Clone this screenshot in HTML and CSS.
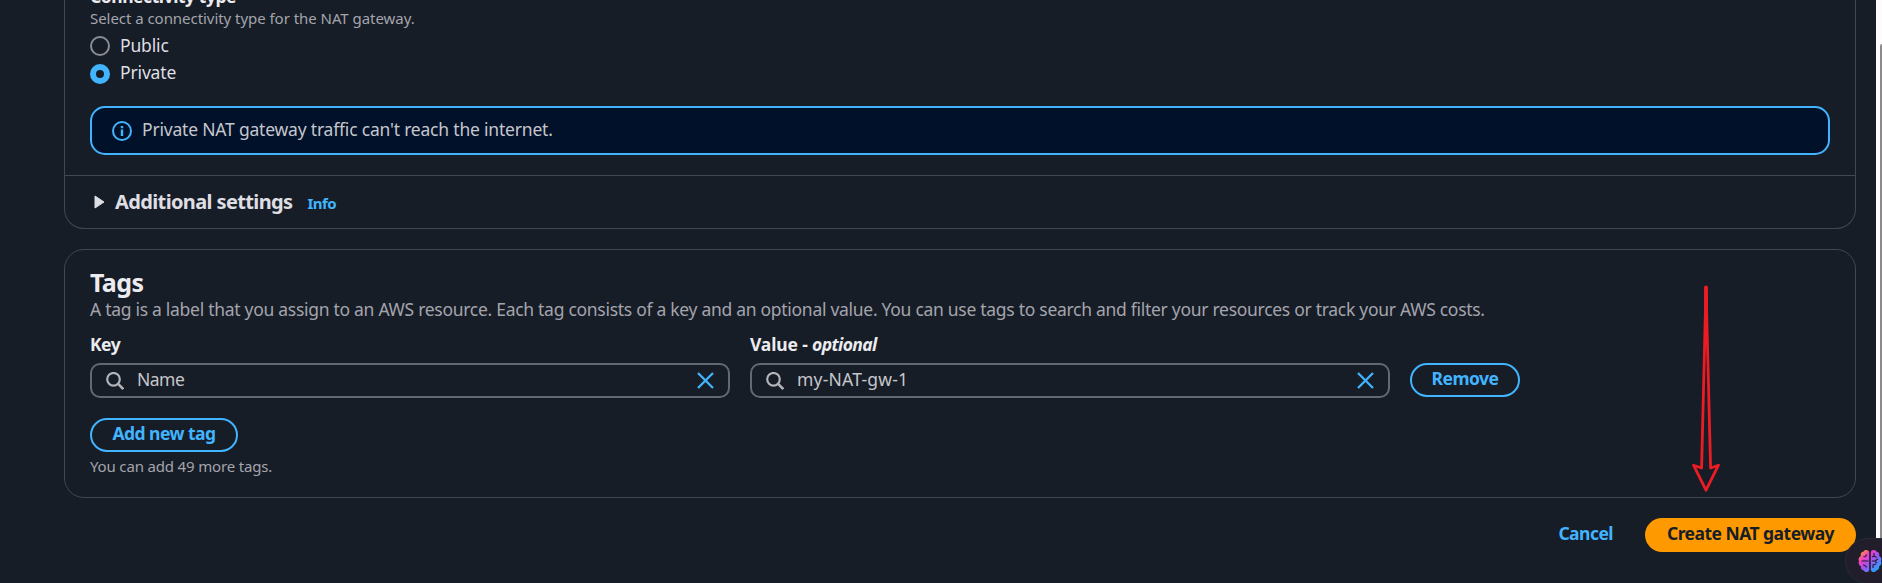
FILE: index.html
```html
<!DOCTYPE html>
<html lang="en">
<head>
<meta charset="utf-8">
<title>Create NAT gateway</title>
<link rel="stylesheet" href="styles.css">
</head>
<body>
<div class="page">
  <main class="content">
    <section class="panel panel-settings">
      <div class="settings-body">
        <div class="field-label">Connectivity type</div>
        <div class="field-hint">Select a connectivity type for the NAT gateway.</div>
        <label class="radio-row"><span class="radio"></span><span>Public</span></label>
        <label class="radio-row"><span class="radio radio-checked"></span><span>Private</span></label>
        <div class="alert">
          <svg class="icon-info" viewBox="0 0 20 20"><circle cx="10" cy="10" r="9" fill="none" stroke="currentColor" stroke-width="2"/><path d="M10 8.4v6.6M10 5v2.2" fill="none" stroke="currentColor" stroke-width="2.4"/></svg>
          <span>Private NAT gateway traffic can't reach the internet.</span>
        </div>
      </div>
      <div class="expander">
        <svg class="icon-caret" viewBox="0 0 11 14"><path d="M1 1v12l9-6z" fill="currentColor" stroke="currentColor" stroke-linejoin="round"/></svg>
        <h3 class="expander-title">Additional settings</h3>
        <a class="info">Info</a>
      </div>
    </section>

    <section class="panel panel-tags">
      <h2 class="title">Tags</h2>
      <p class="description">A tag is a label that you assign to an AWS resource. Each tag consists of a key and an optional value. You can use tags to search and filter your resources or track your AWS costs.</p>
      <div class="tag-row">
        <div class="tag-field">
          <div class="tag-label label-key">Key</div>
          <div class="input">
            <svg class="icon-search" viewBox="0 0 18 18"><circle cx="7.5" cy="7.3" r="6.3" fill="none" stroke="currentColor" stroke-width="2.2"/><path d="M11.9 11.7L17.2 17" stroke="currentColor" stroke-width="2.5"/></svg>
            <span class="input-value value-name">Name</span>
            <svg class="icon-close" viewBox="0 0 17 17"><path d="M1 1l15 15M16 1L1 16" stroke="currentColor" stroke-width="2.3"/></svg>
          </div>
        </div>
        <div class="tag-field">
          <div class="tag-label">Value - <i class="optional">optional</i></div>
          <div class="input">
            <svg class="icon-search" viewBox="0 0 18 18"><circle cx="7.5" cy="7.3" r="6.3" fill="none" stroke="currentColor" stroke-width="2.2"/><path d="M11.9 11.7L17.2 17" stroke="currentColor" stroke-width="2.5"/></svg>
            <span class="input-value value-gateway">my-NAT-gw-1</span>
            <svg class="icon-close" viewBox="0 0 17 17"><path d="M1 1l15 15M16 1L1 16" stroke="currentColor" stroke-width="2.3"/></svg>
          </div>
        </div>
        <button class="button button-remove">Remove</button>
      </div>
      <button class="button button-add">Add new tag</button>
      <div class="limit">You can add 49 more tags.</div>
    </section>

    <footer class="actions">
      <button class="button-link">Cancel</button>
      <button class="button-primary">Create NAT gateway</button>
    </footer>
  </main>
  <aside class="scrollbar"><div class="thumb"></div></aside>

  <svg class="arrow" viewBox="0 0 30 212"><path d="M15 3.5L19.6 184L27.5 181.2L15 206.2L2.5 181.2L10.6 184Z" fill="none" stroke="#ed1c24" stroke-width="2.8" stroke-linejoin="round"/><path d="M15 3.5V50" stroke="#ed1c24" stroke-width="3.8" stroke-linecap="round"/></svg>

  <div class="assistant">
    <svg class="icon-brain" viewBox="0 0 24 24">
      <defs><linearGradient id="brain" x1="0" y1="0" x2="1" y2="1"><stop offset=".08" stop-color="#ff9d2e"/><stop offset=".3" stop-color="#f03fc8"/><stop offset=".55" stop-color="#9a55f5"/><stop offset=".85" stop-color="#25a5ff"/></linearGradient></defs>
      <path d="M11.2 3.2C10.8.8 7 .3 5.7 2.6 3.3 3 2.1 5 2.9 7 .8 8 0 10.2 1 12.1 0 14.3 1 16.6 2.9 17.3 2.5 19.8 4 21.2 5.8 21.4 7 23.8 10.8 23.4 11.2 21zM12.8 3.2C13.2.8 17 .3 18.3 2.6 20.7 3 21.9 5 21.1 7 23.2 8 24 10.2 23 12.1 24 14.3 23 16.6 21.1 17.3 21.5 19.8 20 21.2 18.2 21.4 17 23.8 13.2 23.4 12.8 21z" fill="url(#brain)"/>
      <path d="M3.5 12h7M5.5 7.5c1.8.8 2.5-.4 3-2M5 16c2-.5 2.3 1.5 4 2.2M16 4v3l2.6 1.4M16 7l-2 1M14 12h3l3-2M17 12l2 2M15 19v-3l3-1" fill="none" stroke="#211d2a" stroke-width="1.1"/>
    </svg>
  </div>
</div>
</body>
</html>
```
FILE: styles.css
```css
* { box-sizing: border-box; }
body { margin: 0; background: #161d26; color: #dedee3; font: 17.5px/25px "Noto Sans", "Open Sans", sans-serif; }
h2, h3, p { margin: 0; }
button { font: inherit; font-weight: 700; letter-spacing: -.53px; white-space: nowrap; }
svg { display: block; flex: none; }
.page { position: relative; display: flex; justify-content: space-between; width: 1882px; height: 583px; overflow: hidden; white-space: nowrap; }
.content { width: 1792px; margin-left: 64px; }
.panel { border: 1px solid #424650; }
.panel-settings { height: 229px; border-top: 0; border-radius: 0 0 20px 20px; }
.settings-body { height: 175px; padding: 0 25px; }
.field-label { display: flex; align-items: flex-end; height: 8px; font-weight: 700; line-height: 24px; letter-spacing: -.45px; color: #ebebf0; }
.field-hint { height: 20px; font-size: 15px; line-height: 20px; letter-spacing: -.045px; color: #a4a4ad; }
.radio-row { display: flex; align-items: center; gap: 10px; height: 27px; margin-top: 4px; letter-spacing: -.15px; }
.radio-row + .radio-row { margin-top: 0; }
.radio { width: 20px; height: 20px; margin-top: 1px; border: 2px solid #8c8c94; border-radius: 50%; }
.radio-checked { margin-top: 2px; border: 6px solid #42b4ff; }
.alert { display: flex; align-items: center; gap: 10px; height: 49px; margin-top: 20px; padding: 0 20px 2px; border: 2px solid #42b4ff; border-radius: 15px; background: #001129; color: #c6c6cd; letter-spacing: -.2px; }
.icon-info { width: 20px; height: 20px; margin-top: 2px; color: #42b4ff; }
.expander { display: flex; align-items: center; height: 53px; padding-left: 29px; border-top: 1px solid #424650; }
.icon-caret { width: 11px; height: 14px; }
.expander-title { margin: -1px 0 0 10px; font-size: 20px; letter-spacing: -.63px; }
.info { margin: 3px 0 0 15px; color: #42b4ff; font-size: 15px; font-weight: 700; letter-spacing: -.55px; }
.panel-tags { height: 249px; margin-top: 20px; padding: 18px 25px; border-radius: 20px; }
.title { height: 29px; font-size: 25px; line-height: 28px; letter-spacing: -.6px; color: #ebebf0; }
.description { height: 25px; color: #a4a4ad; letter-spacing: -.287px; }
.tag-row { display: flex; align-items: flex-end; gap: 20px; margin-top: 10px; }
.tag-field { width: 640px; }
.tag-label { height: 31px; font-weight: 700; line-height: 24px; letter-spacing: -.15px; color: #ebebf0; white-space: pre; }
.label-key { letter-spacing: -.5px; }
.optional { letter-spacing: -.6px; }
.input { display: flex; align-items: center; height: 35px; padding: 0 14px; border: 2px solid #656871; border-radius: 10px; color: #c6c6cd; }
.icon-search { width: 18px; height: 18px; color: #b4b4bb; }
.input-value { flex: 1; margin: -2px 0 0 13px; line-height: 29px; }
.value-name { letter-spacing: -.5px; }
.value-gateway { letter-spacing: .2px; }
.icon-close { width: 17px; height: 17px; margin-top: -1px; color: #42b4ff; }
.button { display: flex; align-items: center; justify-content: center; height: 34px; padding: 0 0 4px; border: 2px solid #42b4ff; border-radius: 17px; background: transparent; color: #42b4ff; }
.button-remove { width: 110px; margin-bottom: 1px; }
.button-add { width: 148px; margin-top: 20px; }
.limit { margin-top: 4px; font-size: 15px; line-height: 20px; letter-spacing: -.16px; color: #a4a4ad; }
.actions { display: flex; justify-content: flex-end; gap: 32px; height: 34px; margin-top: 20px; }
.button-link { border: 0; padding: 0 0 3px; background: none; color: #42b4ff; }
.button-primary { width: 211px; padding: 0 0 3px; border: 0; border-radius: 17px; background: #ff9900; color: #161d26; }
.scrollbar { width: 6px; height: 583px; padding: 44px 0 0 4px; background: #fcfcfc; }
.thumb { height: 539px; border-radius: 4px 0 0 0; background: #8b8b8b; }
.arrow { position: absolute; left: 1691px; top: 284px; width: 30px; height: 212px; }
.assistant { position: absolute; left: 1845px; top: 538px; width: 60px; height: 46px; padding: 10px 0 0 12px; border: 1px solid #2b2937; border-radius: 23px; background: #211d2a; }
.icon-brain { width: 24px; height: 24px; }
```
